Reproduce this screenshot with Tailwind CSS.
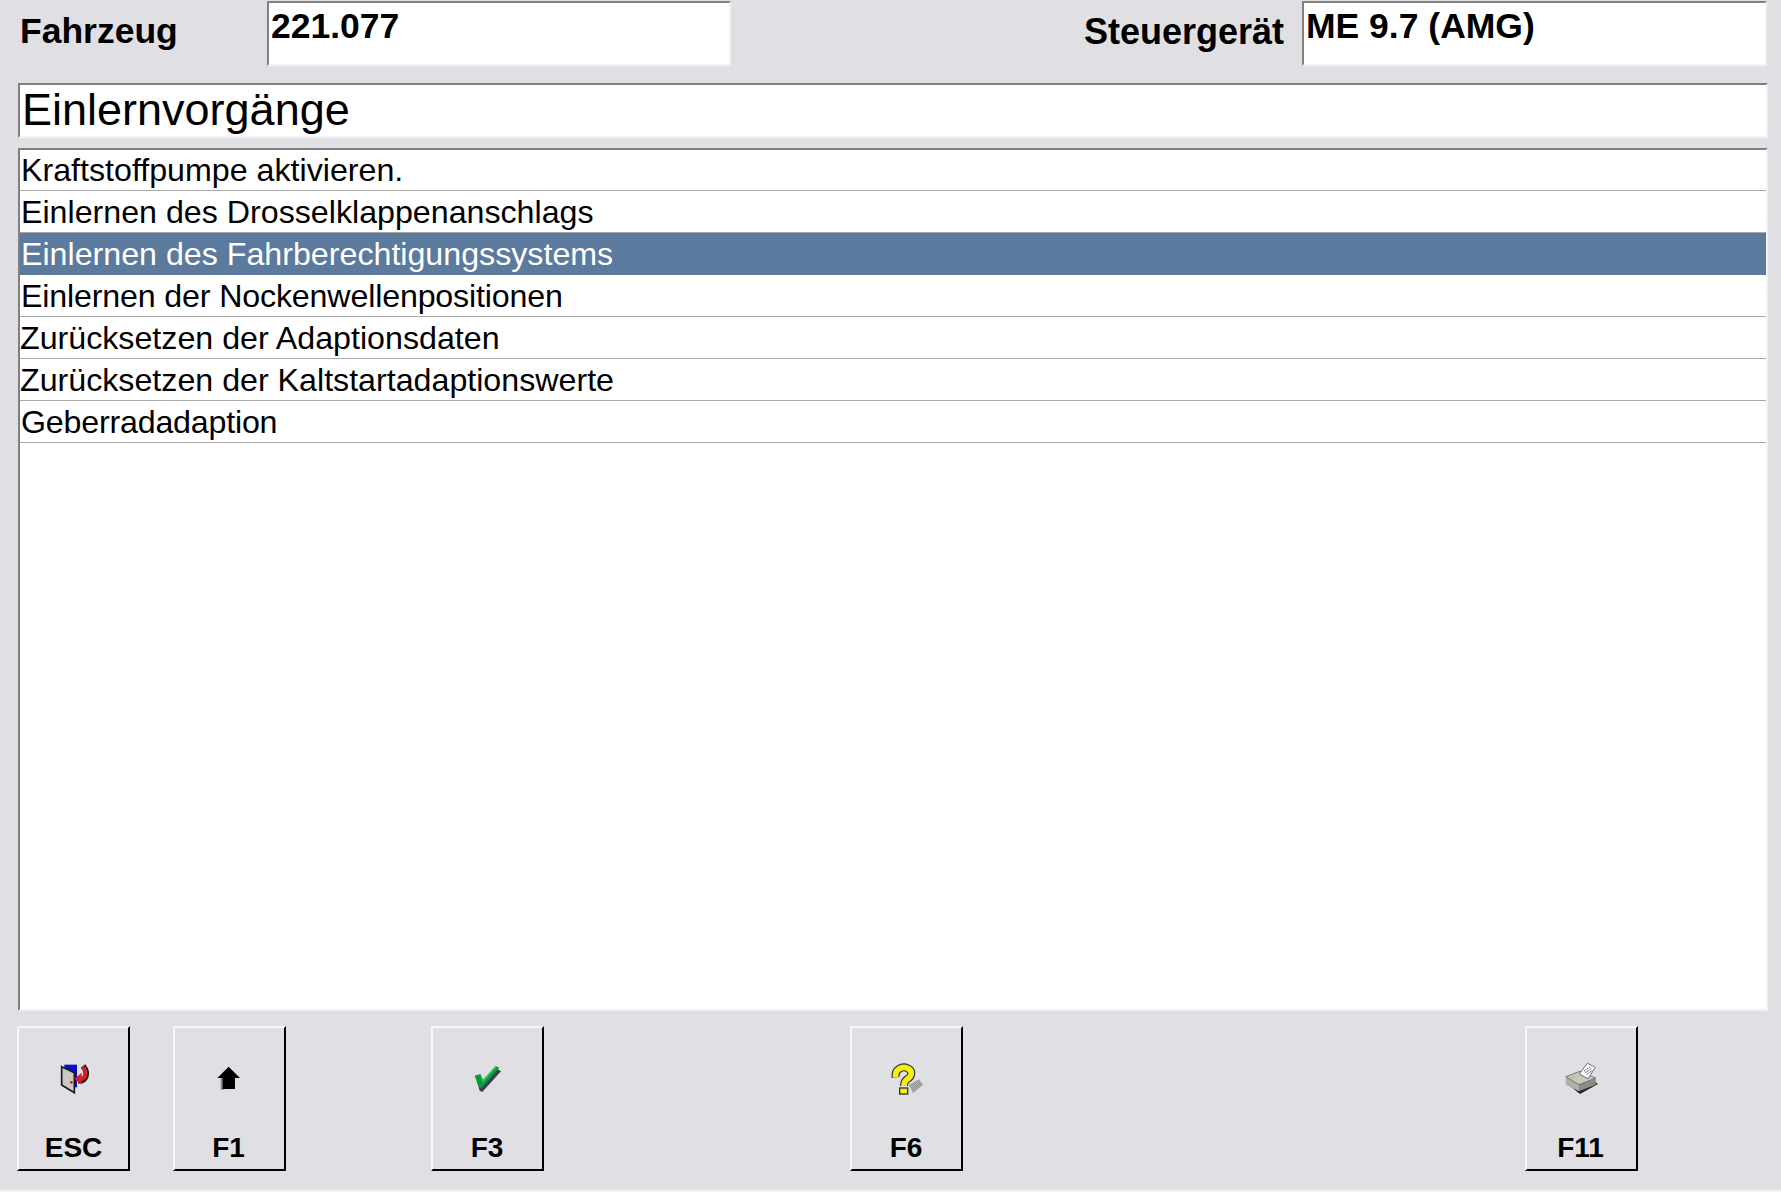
<!DOCTYPE html>
<html lang="de">
<head>
  <meta charset="UTF-8">
  <title>Einlernvorgänge</title>
  <script src="https://cdn.jsdelivr.net/npm/@tailwindcss/browser@4"></script>
</head>
<body class="bg-[#dfdfe4] text-black font-['Liberation_Sans',Arial,sans-serif] w-[1781px] h-[1192px] overflow-hidden">

  <!-- Kopfzeile -->
  <header class="flex items-start pl-[20px] pr-[14px] pt-[1px] h-[83px]">
    <div class="w-[247px] pt-[10px] text-[35.5px] leading-[40px] font-bold">Fahrzeug</div>
    <div class="w-[464px] h-[65px] bg-white border-t-2 border-l-2 border-t-[#808080] border-l-[#808080] border-b-2 border-r-2 border-b-[#f2f2f2] border-r-[#f2f2f2] pl-[2px] pt-[3px] text-[35.5px] leading-[40px] font-bold">221.077</div>
    <div class="ml-auto pr-[18px] pt-[11px] text-[36px] leading-[40px] font-bold">Steuergerät</div>
    <div class="w-[465px] h-[65px] bg-white border-t-2 border-l-2 border-t-[#808080] border-l-[#808080] border-b-2 border-r-2 border-b-[#f2f2f2] border-r-[#f2f2f2] pl-[2px] pt-[3px] text-[35.5px] leading-[40px] font-bold">ME 9.7 (AMG)</div>
  </header>

  <!-- Titel -->
  <div class="ml-[18px] mr-[13px] h-[55px] bg-white border-t-2 border-l-2 border-t-[#808080] border-l-[#808080] border-b-2 border-r-2 border-b-[#f2f2f2] border-r-[#f2f2f2] pl-[2px] text-[45px] leading-[50px]">Einlernvorgänge</div>

  <!-- Liste -->
  <ul class="mt-[10px] ml-[18px] mr-[13px] h-[863px] bg-white border-t-2 border-l-2 border-t-[#808080] border-l-[#808080] border-b-2 border-r-2 border-b-[#f2f2f2] border-r-[#f2f2f2] text-[32.2px] leading-[42px]">
    <li class="h-[41px] pl-[1px] leading-[40px] border-b border-[#a8a8a8]">Kraftstoffpumpe aktivieren.</li>
    <li class="h-[42px] pl-[1px] border-b border-[#a8a8a8]">Einlernen des Drosselklappenanschlags</li>
    <li class="h-[42px] pl-[1px] bg-[#5b7a9d] text-white">Einlernen des Fahrberechtigungssystems</li>
    <li class="h-[42px] pl-[1px] tracking-[-0.16px] border-b border-[#a8a8a8]">Einlernen der Nockenwellenpositionen</li>
    <li class="h-[42px] pl-[0px] border-b border-[#a8a8a8]">Zurücksetzen der Adaptionsdaten</li>
    <li class="h-[42px] pl-[0px] border-b border-[#a8a8a8]">Zurücksetzen der Kaltstartadaptionswerte</li>
    <li class="h-[42px] pl-[1px] tracking-[-0.2px] border-b border-[#a8a8a8]">Geberradadaption</li>
  </ul>

  <!-- Funktionstasten -->
  <footer class="mt-[15px] pl-[17px] flex h-[145px]">
    <button class="w-[113px] h-[145px] flex flex-col items-center border-t-2 border-l-2 border-t-[#f7f7f7] border-l-[#f7f7f7] border-b-2 border-r-2 border-b-black border-r-black">
      <svg class="mt-[26px]" width="60" height="50" viewBox="15 12 180 150">
        <polygon points="76,44 114,44 114,112 76,112" fill="#0c0cc0"/>
        <polygon points="68,50 106,68 106,128 68,105" fill="#c9c9c4" stroke="#1a1a1a" stroke-width="5"/>
        <circle cx="97" cy="97" r="4" fill="#c02020"/>
        <path d="M132 48 C152 72 138 94 118 92" fill="none" stroke="#111" stroke-width="17"/>
        <path d="M132 50 C148 72 136 90 120 87" fill="none" stroke="#e01828" stroke-width="11"/>
        <polygon points="106,86 128,68 128,104" fill="#e01828"/>
      </svg>
      <span class="mt-[28px] text-[28px] leading-[32px] font-bold">ESC</span>
    </button>
    <button class="ml-[43px] w-[113px] h-[145px] flex flex-col items-center border-t-2 border-l-2 border-t-[#f7f7f7] border-l-[#f7f7f7] border-b-2 border-r-2 border-b-black border-r-black">
      <svg class="mt-[26px]" width="60" height="50" viewBox="0 0 180 150">
        <rect x="62" y="72" width="10" height="35" fill="#8a8a8a"/>
        <polygon points="86,38 120,72 105,72 105,105 68,105 68,72 52,72" fill="#000"/>
      </svg>
      <span class="mt-[28px] -ml-[2px] text-[28px] leading-[32px] font-bold">F1</span>
    </button>
    <button class="ml-[145px] w-[113px] h-[145px] flex flex-col items-center border-t-2 border-l-2 border-t-[#f7f7f7] border-l-[#f7f7f7] border-b-2 border-r-2 border-b-black border-r-black">
      <svg class="mt-[26px]" width="60" height="50" viewBox="-7 0 180 150">
        <polygon points="48,76 60,72 70,92 112,46 122,52 66,114 58,110" fill="#3a3f55"/>
        <polygon points="43,65 60,60 68,78 106,36 117,41 64,102 56,100" fill="#0a9a3a"/>
        <polygon points="60,60 68,78 106,36 110,38 68,86 62,72" fill="#38c050"/>
      </svg>
      <span class="mt-[28px] -ml-[1px] text-[28px] leading-[32px] font-bold">F3</span>
    </button>
    <button class="ml-[306px] w-[113px] h-[145px] flex flex-col items-center border-t-2 border-l-2 border-t-[#f7f7f7] border-l-[#f7f7f7] border-b-2 border-r-2 border-b-black border-r-black">
      <svg class="mt-[26px]" width="60" height="50" viewBox="4 0 180 150">
        <defs>
          <pattern id="dots" width="6" height="6" patternUnits="userSpaceOnUse">
            <rect width="3" height="3" fill="#666"/>
            <rect x="3" y="3" width="3" height="3" fill="#666"/>
          </pattern>
        </defs>
        <polygon points="100,92 130,76 142,92 112,118" fill="url(#dots)"/>
        <path d="M60 70 C56 46 80 36 94 42 C114 50 108 68 94 76 C88 80 85 86 85 96" fill="none" stroke="#333" stroke-width="24"/>
        <path d="M60 70 C56 46 80 36 94 42 C114 50 108 68 94 76 C88 80 85 86 85 96" fill="none" stroke="#f6f010" stroke-width="17"/>
        <rect x="72" y="102" width="24" height="18" fill="#f6f010" stroke="#333" stroke-width="4"/>
      </svg>
      <span class="mt-[28px] -ml-[1px] text-[28px] leading-[32px] font-bold">F6</span>
    </button>
    <button class="ml-[562px] w-[113px] h-[145px] flex flex-col items-center border-t-2 border-l-2 border-t-[#f7f7f7] border-l-[#f7f7f7] border-b-2 border-r-2 border-b-black border-r-black">
      <svg class="mt-[26px]" width="60" height="50" viewBox="4 0 180 150">
        <polygon points="58,96 88,120 142,90 128,80" fill="#222"/>
        <polygon points="45,68 45,92 85,112 85,92" fill="#b0b0aa"/>
        <polygon points="85,92 85,112 135,92 135,72" fill="#8c8c8a"/>
        <polygon points="45,68 88,52 135,72 85,92" fill="#c8c8c2" stroke="#66665f" stroke-width="2.5"/>
        <polygon points="55,70 72,64 78,70 62,76" fill="#c8c080"/>
        <polygon points="86,60 110,28 134,40 112,74" fill="#fff" stroke="#555" stroke-width="2.5"/>
        <path d="M100 52 L118 38 M104 56 L122 44 M108 62 L124 50" stroke="#3040a0" stroke-width="3" stroke-dasharray="4 2"/>
      </svg>
      <span class="mt-[28px] -ml-[2px] text-[28px] leading-[32px] font-bold">F11</span>
    </button>
  </footer>

  <div class="mt-[19px] h-[2px] bg-[#f2f2f2]"></div>
</body>
</html>
